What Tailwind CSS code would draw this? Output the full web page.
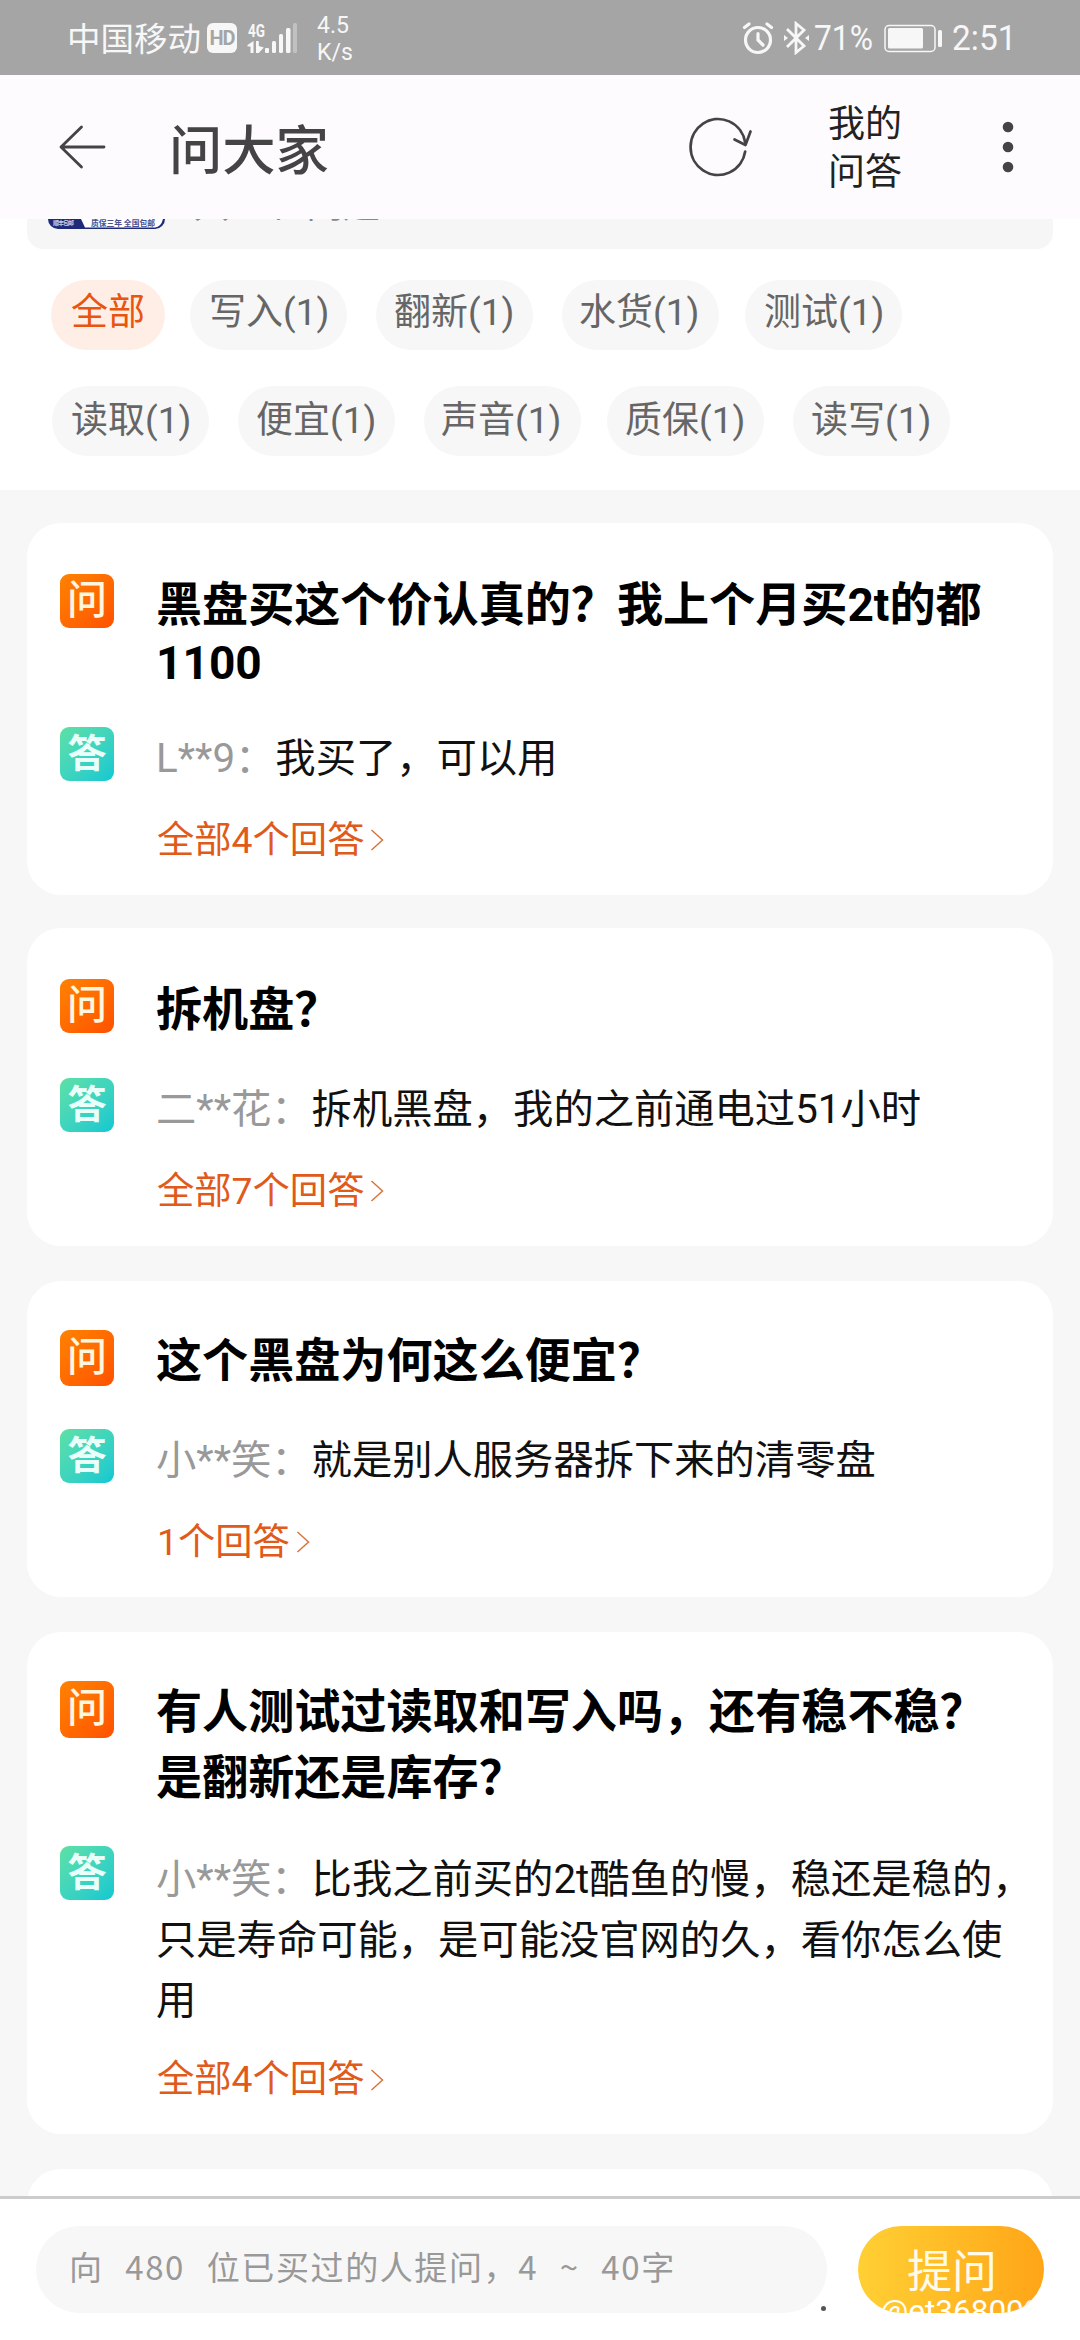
<!DOCTYPE html>
<html lang="zh-CN">
<head>
<meta charset="utf-8">
<title>问大家</title>
<script src="https://cdn.jsdelivr.net/npm/@tailwindcss/browser@4"></script>
</head>
<body class="w-[1080px] h-[2340px] overflow-hidden bg-white font-['Roboto','Noto_Sans_CJK_SC',sans-serif]">
<div class="flex h-[2340px] w-[1080px] flex-col overflow-hidden">

  <!-- Status bar -->
  <div class="flex h-[75px] shrink-0 items-center bg-[#a5a5a5] pl-[67px] pr-[65px] text-[#f7f7f7]">
    <span class="w-[140px] whitespace-nowrap text-[33.5px] leading-[75px] pt-[3px]">中国移动</span>
    <span class="flex h-[30px] w-[30px] items-center justify-center rounded-[6px] bg-[#f7f7f7] text-[20px] font-bold tracking-[-1px] text-[#a5a5a5]"><span class="inline-block">HD</span></span>
    <svg class="ml-[10px] h-[36px] w-[52px]" viewBox="0 0 52 36" fill="#f7f7f7">
      <text x="1" y="17" font-size="19" font-weight="700" font-family="Roboto" textLength="17" lengthAdjust="spacingAndGlyphs">4G</text>
      <path d="M6.500 21v12H3.500v-6.500H.5v-1.500zM9 21h2.800v5l5 1.500-5 5.500H9z"/>
      <rect x="18" y="28" width="4" height="5" rx="1"/><rect x="25" y="21" width="4" height="12" rx="1.500"/><rect x="32" y="14" width="4" height="19" rx="1.500"/><rect x="39" y="8" width="4.500" height="25" rx="1.500"/><rect x="46" y="3" width="4" height="30" rx="1.500" opacity=".35"/>
    </svg>
    <span class="ml-[18px] pt-[3px] text-[23px] leading-[27px]">4.5<br>K/s</span>
    <div class="ml-auto flex items-center pt-[1px]">
      <svg class="h-[34px] w-[32px]" viewBox="0 0 32 34" fill="none" stroke="#f7f7f7" stroke-width="3.200" stroke-linecap="round">
        <circle cx="16" cy="19" r="12.500"/><path d="M16 12.500v6.500l5 5M2.500 6.500L7 3M29.500 6.500L25 3"/>
      </svg>
      <svg class="ml-[9px] h-[34px] w-[27px]" viewBox="0 0 27 34" fill="none" stroke="#f7f7f7" stroke-width="2.800">
        <path d="M4 8l17 17-8 6.500V2.500L21 9 4 26"/><path d="M1 14l4 3-4 3zM26 14l-4 3 4 3z" fill="#f7f7f7" stroke="none"/>
      </svg>
      <span class="ml-[4px] w-[70px] text-[34.500px] leading-none"><span class="inline-block origin-left scale-x-[0.92]">71%</span></span>
      <svg class="h-[29px] w-[59px]" viewBox="0 0 59 29">
        <rect x="1" y="1.500" width="50" height="26" rx="4" fill="none" stroke="#f7f7f7" stroke-width="1.500"/><rect x="4" y="4" width="35" height="20.500" rx="1.500" fill="#f7f7f7"/><rect x="54" y="6" width="4" height="17" rx="1.500" fill="#f7f7f7"/>
      </svg>
      <span class="ml-[9px] w-[63px] text-[34.500px] leading-none"><span class="inline-block origin-left scale-x-[0.97]">2:51</span></span>
    </div>
  </div>

  <!-- Title bar -->
  <header class="flex h-[144px] shrink-0 items-center bg-[#fefbfe] text-[#444]">
    <svg class="ml-[58px] h-[48px] w-[50px]" viewBox="0 0 50 48" fill="none" stroke="#444" stroke-width="2.800" stroke-linecap="round" stroke-linejoin="round"><path d="M46 24H3M23.500 4L3 24l20.500 20"/></svg>
    <h1 class="ml-[61px] w-[511px] pt-[9px] text-[53.300px] font-medium leading-[70px]">问大家</h1>
    <svg class="h-[66px] w-[76px]" viewBox="0 0 76 66" fill="none" stroke="#444" stroke-width="2.700" stroke-linecap="round" stroke-linejoin="round">
      <path d="M65.200 37.500A27.500 28 0 1 1 65.200 28.500"/><path d="M54.500 25.500l11 5.500 5-13.500"/>
    </svg>
    <span class="ml-[72px] w-[76px] pt-[4px] text-[37px] leading-[48.500px] text-[#222]">我的<br>问答</span>
    <svg class="ml-[98px] h-[56px] w-[12px]" viewBox="0 0 12 56" fill="#444"><circle cx="6" cy="8" r="5.300"/><circle cx="6" cy="28" r="5.300"/><circle cx="6" cy="48" r="5.300"/></svg>
  </header>

  <!-- Product strip (scrolled under the title bar) and filters -->
  <section class="h-[271px] shrink-0 bg-white">
    <div class="mx-[27px] flex h-[30px] items-start overflow-hidden rounded-b-[16px] bg-[#f6f6f6]">
      <svg class="ml-[21px] h-[10px] w-[117px] shrink-0 rounded-b-[10px]" viewBox="0 0 117 10">
        <rect width="117" height="10" fill="#1f2a78"/>
        <path d="M33 0h82q-2 8-8 8.500H37z" fill="#fff"/>
        <text x="5" y="6" font-size="6" font-weight="700" font-family="Noto Sans CJK SC" fill="#c8cbe6" textLength="21">顺丰包邮</text>
        <text x="43" y="6.500" font-size="7.800" font-weight="700" font-family="Noto Sans CJK SC" fill="#4a5090" textLength="64">质保三年 全国包邮</text>
      </svg>
      <div class="ml-[28px] h-[12px] overflow-hidden"><span class="mt-[-33px] block whitespace-nowrap text-[37px] leading-[40px] text-[#888]">共 7个 问题</span></div>
    </div>
    <div class="ml-[51px] mt-[31px] flex h-[70px] text-[37px] leading-[66px] text-[#666]">
      <span class="w-[114px] rounded-full bg-[#ffeee6] pl-[20px] text-[#e8550f]">全部</span>
      <span class="ml-[25px] w-[157px] rounded-full bg-[#f7f7f7] pl-[19px]">写入(1)</span>
      <span class="ml-[29px] w-[157px] rounded-full bg-[#f7f7f7] pl-[18px]">翻新(1)</span>
      <span class="ml-[29px] w-[157px] rounded-full bg-[#f7f7f7] pl-[17px]">水货(1)</span>
      <span class="ml-[26px] w-[157px] rounded-full bg-[#f7f7f7] pl-[19px]">测试(1)</span>
    </div>
    <div class="ml-[52px] mt-[36px] flex h-[70px] text-[37px] leading-[70px] text-[#666]">
      <span class="w-[157px] rounded-full bg-[#f7f7f7] pl-[19px]">读取(1)</span>
      <span class="ml-[29px] w-[157px] rounded-full bg-[#f7f7f7] pl-[18px]">便宜(1)</span>
      <span class="ml-[29px] w-[157px] rounded-full bg-[#f7f7f7] pl-[17px]">声音(1)</span>
      <span class="ml-[26px] w-[157px] rounded-full bg-[#f7f7f7] pl-[18px]">质保(1)</span>
      <span class="ml-[29px] w-[157px] rounded-full bg-[#f7f7f7] pl-[18px]">读写(1)</span>
    </div>
  </section>

  <!-- Question list -->
  <main class="flex h-[1706px] shrink-0 flex-col gap-[35px] overflow-hidden bg-[#f7f7f7] px-[27px] pt-[33px]">
    <article class="mb-[-2px] h-[372px] shrink-0 rounded-[34px] bg-white pl-[33px] pt-[51px]">
      <div class="flex h-[153px]">
        <span class="h-[54px] w-[54px] shrink-0 rounded-[9px] bg-linear-to-br from-[#ff8200] to-[#ff5000] text-center text-[40px] font-medium leading-[54px] text-[#fff6e0]">问</span>
        <h2 class="ml-[42px] mt-[2px] text-[46.100px] font-bold leading-[58px] text-black">黑盘买这个价认真的？我上个月买2t的都<br>1100</h2>
      </div>
      <div class="flex h-[82px]">
        <span class="h-[54px] w-[54px] shrink-0 rounded-[9px] bg-linear-to-br from-[#5de0a5] to-[#0bc8d2] text-center text-[39px] font-bold leading-[54px] text-[#eafffa]">答</span>
        <p class="ml-[42px] mt-[2px] text-[40.300px] leading-[60.500px] text-[#111]"><span class="text-[#999]">L**9：</span>我买了，可以用</p>
      </div>
      <a class="ml-[97px] flex items-center text-[37.300px] leading-[62px] text-[#e05a1a]">全部4个回答<svg class="ml-[6px] h-[22px] w-[14px]" viewBox="0 0 14 22" fill="none" stroke="#d9763f" stroke-width="1.500"><path d="M1.500 1L12.500 11 1.500 21"/></svg></a>
    </article>

    <article class="h-[318px] shrink-0 rounded-[34px] bg-white pl-[33px] pt-[51px]">
      <div class="flex h-[99px]">
        <span class="h-[54px] w-[54px] shrink-0 rounded-[9px] bg-linear-to-br from-[#ff8200] to-[#ff5000] text-center text-[40px] font-medium leading-[54px] text-[#fff6e0]">问</span>
        <h2 class="ml-[42px] mt-[-2px] text-[46.100px] font-bold leading-[66px] text-black">拆机盘？</h2>
      </div>
      <div class="flex h-[82px]">
        <span class="h-[54px] w-[54px] shrink-0 rounded-[9px] bg-linear-to-br from-[#5de0a5] to-[#0bc8d2] text-center text-[39px] font-bold leading-[54px] text-[#eafffa]">答</span>
        <p class="ml-[42px] mt-[2px] text-[40.300px] leading-[60.500px] text-[#111]"><span class="text-[#999]">二**花：</span>拆机黑盘，我的之前通电过51小时</p>
      </div>
      <a class="ml-[97px] flex items-center text-[37.300px] leading-[62px] text-[#e05a1a]">全部7个回答<svg class="ml-[6px] h-[22px] w-[14px]" viewBox="0 0 14 22" fill="none" stroke="#d9763f" stroke-width="1.500"><path d="M1.500 1L12.500 11 1.500 21"/></svg></a>
    </article>

    <article class="h-[316px] shrink-0 rounded-[34px] bg-white pl-[33px] pt-[49px]">
      <div class="flex h-[99px]">
        <span class="h-[56px] w-[54px] shrink-0 rounded-[9px] bg-linear-to-br from-[#ff8200] to-[#ff5000] text-center text-[40px] font-medium leading-[56px] text-[#fff6e0]">问</span>
        <h2 class="ml-[42px] mt-[-2px] text-[46.100px] font-bold leading-[66px] text-black">这个黑盘为何这么便宜？</h2>
      </div>
      <div class="flex h-[82px]">
        <span class="h-[54px] w-[54px] shrink-0 rounded-[9px] bg-linear-to-br from-[#5de0a5] to-[#0bc8d2] text-center text-[39px] font-bold leading-[54px] text-[#eafffa]">答</span>
        <p class="ml-[42px] mt-[2px] text-[40.300px] leading-[60.500px] text-[#111]"><span class="text-[#999]">小**笑：</span>就是别人服务器拆下来的清零盘</p>
      </div>
      <a class="ml-[97px] flex items-center text-[37.300px] leading-[62px] text-[#e05a1a]">1个回答<svg class="ml-[6px] h-[22px] w-[14px]" viewBox="0 0 14 22" fill="none" stroke="#d9763f" stroke-width="1.500"><path d="M1.500 1L12.500 11 1.500 21"/></svg></a>
    </article>

    <article class="h-[502px] shrink-0 rounded-[34px] bg-white pl-[33px] pt-[49px]">
      <div class="flex h-[165px]">
        <span class="h-[57px] w-[54px] shrink-0 rounded-[9px] bg-linear-to-br from-[#ff8200] to-[#ff5000] text-center text-[40px] font-medium leading-[56px] text-[#fff6e0]">问</span>
        <h2 class="ml-[42px] mt-[-2px] text-[46.100px] font-bold leading-[66px] text-black">有人测试过读取和写入吗，还有稳不稳？<br>是翻新还是库存？</h2>
      </div>
      <div class="flex h-[203px]">
        <span class="h-[54px] w-[54px] shrink-0 rounded-[9px] bg-linear-to-br from-[#5de0a5] to-[#0bc8d2] text-center text-[39px] font-bold leading-[54px] text-[#eafffa]">答</span>
        <p class="ml-[42px] mt-[4px] whitespace-nowrap text-[40.300px] leading-[60.500px] text-[#111]"><span class="text-[#999]">小**笑：</span>比我之前买的2t酷鱼的慢，稳还是稳的，<br>只是寿命可能，是可能没官网的久，看你怎么使<br>用</p>
      </div>
      <a class="ml-[97px] flex items-center text-[37.300px] leading-[61px] text-[#e05a1a]">全部4个回答<svg class="ml-[6px] h-[22px] w-[14px]" viewBox="0 0 14 22" fill="none" stroke="#d9763f" stroke-width="1.500"><path d="M1.500 1L12.500 11 1.500 21"/></svg></a>
    </article>

    <article class="h-[300px] shrink-0 rounded-[34px] bg-white"></article>
  </main>

  <!-- Ask bar -->
  <footer class="relative flex h-[144px] shrink-0 border-t-[3px] border-[#ccc] bg-white pl-[36px] pt-[27px]">
    <div class="h-[87px] w-[791px] whitespace-pre rounded-full bg-[#f7f7f7] pl-[33px] font-['Noto_Sans_CJK_SC',sans-serif] text-[33px] leading-[80px] tracking-[1.600px] text-[#999] [word-spacing:12.700px]">向 480 位已买过的人提问，4 ~ 40字</div>
    <button class="relative ml-[31px] h-[87px] w-[186px] overflow-hidden rounded-full bg-linear-to-r from-[#ffd033] to-[#ffa516] pl-[2px] text-[45px] leading-[93px] text-[#fffbe8]">提问<span class="absolute left-[22px] top-[68px] whitespace-nowrap text-[31.500px] leading-[36px] text-white">@et368009</span></button>
    <span class="absolute left-[821px] top-[107px] h-[5px] w-[5px] rounded-full bg-[#555]"></span>
  </footer>
</div>
</body>
</html>
